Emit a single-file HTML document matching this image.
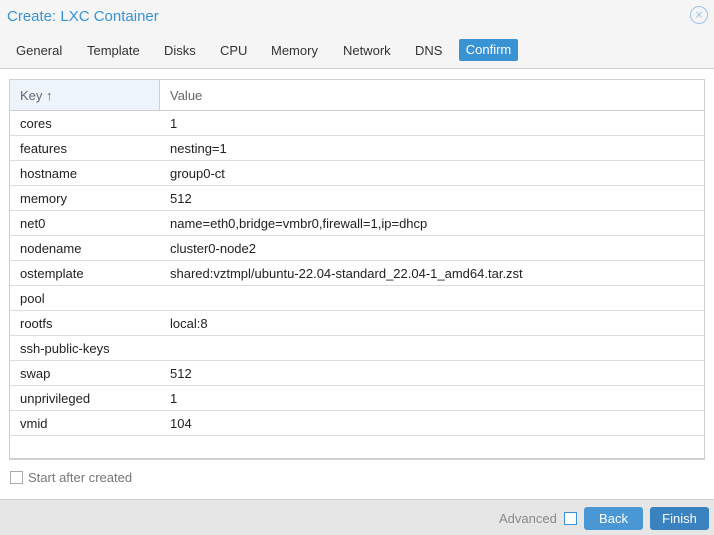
<!DOCTYPE html>
<html><head><style>
body{margin:0;width:714px;height:534px;overflow:hidden;font-family:"Liberation Sans",sans-serif;font-size:13px;color:#222;background:#fff;position:relative}
.hdr{position:absolute;left:0;top:0;width:714px;height:68px;background:#f5f5f5;border-bottom:1px solid #d0d0d0}
.title{position:absolute;left:7px;top:8px;font-size:15px;color:#3892d4}
.close{position:absolute;left:690px;top:6px;width:16px;height:16px;border:1px solid #9cc3e5;border-radius:50%;color:#9cc3e5;font-size:13px;line-height:16px;text-align:center}
.tab{position:absolute;top:43px;font-size:13px;color:#333}
.conf{position:absolute;left:459px;top:39px;width:59px;height:22px;background:#3892d4;color:#fff;border-radius:2px;text-align:center;line-height:22px}
.grid{position:absolute;left:9px;top:79px;width:694px;height:378px;border:1px solid #d0d0d0;border-bottom:2px solid #d0d0d0}
.gh{height:30px;border-bottom:1px solid #d0d0d0;position:relative;color:#666}
.gh .k{position:absolute;left:0;top:0;width:149px;height:30px;background:#eef4fb;border-right:1px solid #d0d0d0}
.gh span{position:absolute;top:8px}
.r{height:24px;border-bottom:1px solid #dcdcdc;position:relative}
.r span{position:absolute;top:5px}
.foot{position:absolute;left:0;top:499px;width:714px;height:35px;background:#e6e6e6;border-top:1px solid #d0d0d0}
.btn{position:absolute;top:7px;height:23px;width:59px;border-radius:3px;color:#fff;text-align:center;line-height:23px}
.cb{position:absolute;width:11px;height:11px;border:1px solid #aaa;background:#fff}
</style></head><body>
<div class="hdr">
<div class="title">Create: LXC Container</div>
<div class="close">×</div>
<span class="tab" style="left:16px">General</span>
<span class="tab" style="left:87px">Template</span>
<span class="tab" style="left:164px">Disks</span>
<span class="tab" style="left:220px">CPU</span>
<span class="tab" style="left:271px">Memory</span>
<span class="tab" style="left:343px">Network</span>
<span class="tab" style="left:415px">DNS</span>
<div class="conf">Confirm</div>
</div>
<div class="grid">
<div class="gh"><div class="k"></div><span style="left:10px">Key ↑</span><span style="left:160px">Value</span></div>
<div class="r"><span style="left:10px">cores</span><span style="left:160px">1</span></div>
<div class="r"><span style="left:10px">features</span><span style="left:160px">nesting=1</span></div>
<div class="r"><span style="left:10px">hostname</span><span style="left:160px">group0-ct</span></div>
<div class="r"><span style="left:10px">memory</span><span style="left:160px">512</span></div>
<div class="r"><span style="left:10px">net0</span><span style="left:160px">name=eth0,bridge=vmbr0,firewall=1,ip=dhcp</span></div>
<div class="r"><span style="left:10px">nodename</span><span style="left:160px">cluster0-node2</span></div>
<div class="r"><span style="left:10px">ostemplate</span><span style="left:160px">shared:vztmpl/ubuntu-22.04-standard_22.04-1_amd64.tar.zst</span></div>
<div class="r"><span style="left:10px">pool</span></div>
<div class="r"><span style="left:10px">rootfs</span><span style="left:160px">local:8</span></div>
<div class="r"><span style="left:10px">ssh-public-keys</span></div>
<div class="r"><span style="left:10px">swap</span><span style="left:160px">512</span></div>
<div class="r"><span style="left:10px">unprivileged</span><span style="left:160px">1</span></div>
<div class="r"><span style="left:10px">vmid</span><span style="left:160px">104</span></div>
</div>
<div class="cb" style="left:10px;top:471px"></div>
<span style="position:absolute;left:28px;top:470px;color:#777">Start after created</span>
<div class="foot">
<span style="position:absolute;left:499px;top:11px;color:#888">Advanced</span>
<div class="cb" style="left:564px;top:12px;border-color:#3892d4"></div>
<div class="btn" style="left:584px;background:#4a97d6">Back</div>
<div class="btn" style="left:650px;background:#3a82bf">Finish</div>
</div>
</body></html>
